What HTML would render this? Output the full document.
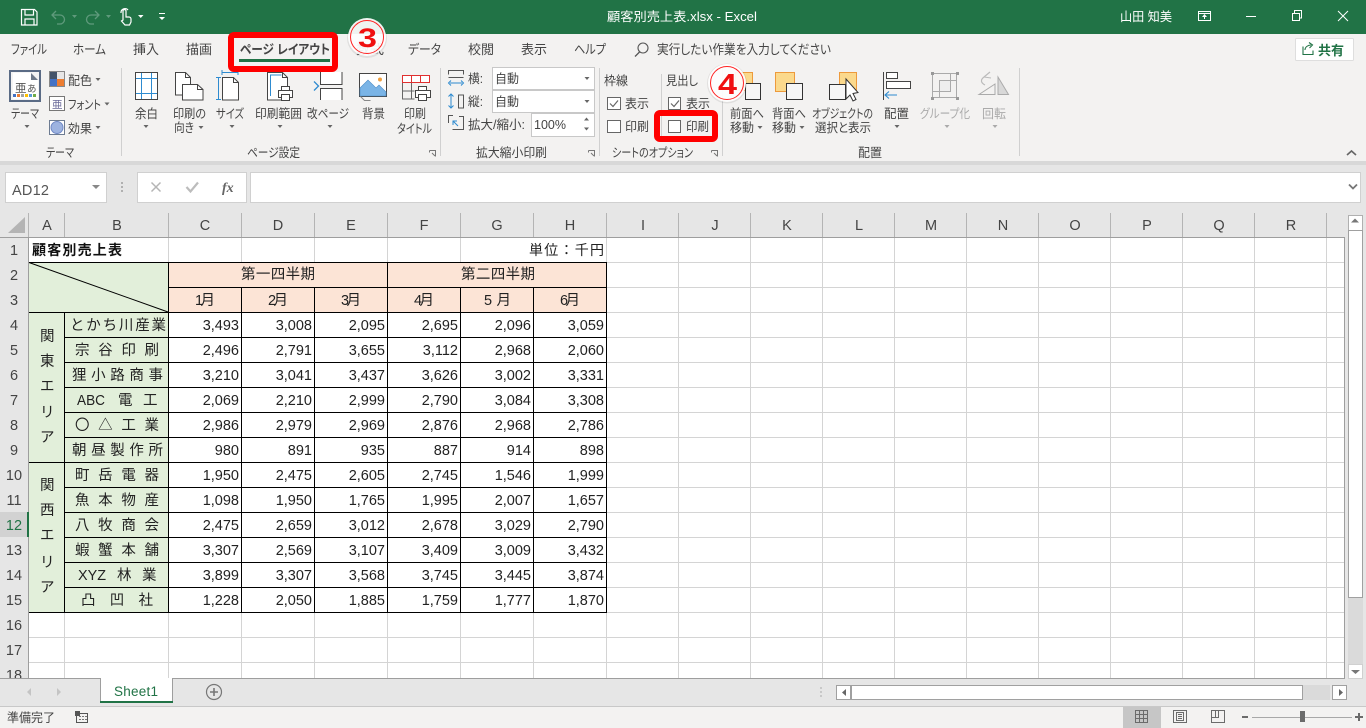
<!DOCTYPE html>
<html lang="ja"><head><meta charset="utf-8"><title>顧客別売上表.xlsx - Excel</title>
<style>
html,body{margin:0;padding:0;width:1366px;height:728px;overflow:hidden;background:#e6e6e6}
svg{display:block;position:absolute;left:0;top:0}
text{font-family:"Liberation Sans","Noto Sans CJK JP",sans-serif}
.u{font-size:12.5px;fill:#444;font-feature-settings:"palt"}
.g{font-size:12.5px;fill:#aaa;font-feature-settings:"palt"}
.tabs text{font-size:13px;font-feature-settings:"palt"}
.c{font-size:14.5px;fill:#222}
.h{font-size:14.5px;fill:#444;text-anchor:middle}
.n{font-size:14.5px;fill:#222;text-anchor:end}
.car{fill:#666}
.li{shape-rendering:crispEdges}
</style></head><body>
<svg width="1366" height="728" viewBox="0 0 1366 728" xmlns="http://www.w3.org/2000/svg">
<!-- chrome backgrounds -->
<g class="li">
<rect width="1366" height="728" fill="#e6e6e6"/>
<rect width="1366" height="34" fill="#217346"/>
<rect y="34" width="1366" height="127" fill="#f3f2f1"/>
<rect y="161" width="1366" height="4" fill="#d8d8d8"/>
<rect x="121" y="68" width="1" height="88" fill="#d0d0d0"/>
<rect x="440" y="68" width="1" height="88" fill="#d0d0d0"/>
<rect x="599" y="68" width="1" height="88" fill="#d0d0d0"/>
<rect x="661" y="74" width="1" height="66" fill="#d0d0d0"/>
<rect x="722" y="68" width="1" height="88" fill="#d0d0d0"/>
<rect x="1019" y="68" width="1" height="88" fill="#d0d0d0"/>
</g>
<!-- QAT -->
<g fill="none" stroke="#fff" stroke-width="1.2">
<path d="M21.5 9.5h13l2.5 2.5v13h-15.500z"/><path d="M25 9.500v5.500h8.500v-5.500M25 25v-6h9v6"/>
</g>
<g fill="none" stroke="#5f9a7c" stroke-width="1.3">
<path d="M56 11l-4 4 4 4M52 15h8a4.500 4.500 0 0 1 0 9h-3"/>
<path d="M95 11l4 4-4 4M99 15h-8a4.500 4.500 0 0 0 0 9h3"/>
</g>
<path d="M72 15h5l-2.500 3zM106 15h5l-2.500 3z" fill="#5f9a7c"/>
<g fill="none" stroke="#fff" stroke-width="1.200">
<path d="M123 20v-9a1.500 1.500 0 0 1 3 0v6h3a2 2 0 0 1 2 2v3l-1.500 3h-4.500l-3.500-4z"/><path d="M121 13a4 4 0 0 1 7-3"/>
</g>
<path d="M138 15h5.500l-2.750 3zM159 17h6l-3 3zM159 13h6v1h-6z" fill="#fff"/>
<!-- title -->
<text x="607" y="21" font-size="12.500" fill="#fff" textLength="150" lengthAdjust="spacingAndGlyphs">顧客別売上表.xlsx  -  Excel</text>
<text x="1120" y="21" font-size="12.500" fill="#fff" textLength="52" lengthAdjust="spacingAndGlyphs">山田 知美</text>
<g fill="none" stroke="#fff" stroke-width="1" class="li">
<rect x="1198.500" y="11.500" width="12" height="9"/><path d="M1199 13.500h11"/>
<path d="M1246 16.500h10"/>
<rect x="1292.500" y="13.500" width="7" height="7"/><path d="M1294.500 13v-2.500h7v7.500h-2"/>
</g>
<path d="M1204.500 14l2.500 3h-2v2h-1v-2h-2z" fill="#fff"/>
<path d="M1338 11l10 10M1348 11l-10 10" stroke="#fff" stroke-width="1" fill="none"/>
<!-- tabs -->
<g class="tabs" fill="#444">
<text x="11" y="54" textLength="36" lengthAdjust="spacingAndGlyphs">ファイル</text>
<text x="73" y="54" textLength="33" lengthAdjust="spacingAndGlyphs">ホーム</text>
<text x="133" y="54" textLength="26" lengthAdjust="spacingAndGlyphs">挿入</text>
<text x="186" y="54" textLength="26" lengthAdjust="spacingAndGlyphs">描画</text>
<text x="356" y="54" textLength="28" lengthAdjust="spacingAndGlyphs">数式</text>
<text x="408" y="54" textLength="33" lengthAdjust="spacingAndGlyphs">データ</text>
<text x="468" y="54" textLength="26" lengthAdjust="spacingAndGlyphs">校閲</text>
<text x="521" y="54" textLength="26" lengthAdjust="spacingAndGlyphs">表示</text>
<text x="574" y="54" textLength="32" lengthAdjust="spacingAndGlyphs">ヘルプ</text>
<text x="657" y="54" textLength="174" lengthAdjust="spacingAndGlyphs">実行したい作業を入力してください</text>
</g>
<text x="240" y="54" font-size="13" font-weight="700" fill="#444" style="font-feature-settings:'palt'" textLength="90" lengthAdjust="spacingAndGlyphs">ページ レイアウト</text>
<rect x="239" y="59" width="91" height="3" fill="#217346" class="li"/>
<circle cx="643" cy="48" r="5" fill="none" stroke="#555" stroke-width="1.100"/><path d="M639.500 52l-4.500 4.500" stroke="#555" stroke-width="1.300"/>
<!-- share -->
<rect x="1295.500" y="38.500" width="58" height="22" rx="1" fill="#fff" stroke="#dedede"/>
<path d="M1303 46.500v8h10v-4M1305 50c0-3 3-5 6-5M1309 42.500l3.500 2.500-3 3" fill="none" stroke="#217346" stroke-width="1.100"/>
<text x="1318" y="55" font-size="13" font-weight="700" fill="#217346" textLength="26" lengthAdjust="spacingAndGlyphs">共有</text>
<!-- theme group -->
<rect x="10" y="71" width="30" height="30" fill="#f4f4f4" stroke="#5a6b85" stroke-width="2" class="li"/>
<path d="M13 73h18l7 7v19h-25z" fill="#fff"/><path d="M31 73l7 7h-7z" fill="#6f7a8a"/>
<text x="15" y="92" font-size="11.500" fill="#555">亜</text><text x="27" y="92" font-size="9.500" fill="#555">あ</text>
<g class="li"><rect x="13" y="94" width="3" height="3" fill="#4472c4"/><rect x="17" y="94" width="3" height="3" fill="#ed7d31"/><rect x="21" y="94" width="3" height="3" fill="#a5a5a5"/><rect x="25" y="94" width="3" height="3" fill="#ffc000"/><rect x="29" y="94" width="3" height="3" fill="#5b9bd5"/><rect x="33" y="94" width="3" height="3" fill="#70ad47"/>
<rect x="49" y="71" width="16" height="16" fill="#888"/><rect x="50" y="72" width="7" height="7" fill="#44546a"/><rect x="57" y="72" width="7" height="7" fill="#e7e6e6"/><rect x="50" y="79" width="7" height="7" fill="#4472c4"/><rect x="57" y="79" width="7" height="7" fill="#ed7d31"/>
<rect x="49.500" y="96.500" width="15" height="14" fill="#fff" stroke="#777"/>
<rect x="49.500" y="120.500" width="15" height="14" fill="#fff" stroke="#6d7c92"/></g>
<text x="52" y="108" font-size="10.500" fill="#6a6a9a">亜</text>
<circle cx="57" cy="127.500" r="6" fill="#9db3e0" stroke="#6f88c4"/>
<text class="u" x="68" y="85" textLength="24" lengthAdjust="spacingAndGlyphs">配色</text>
<text class="u" x="68" y="109" textLength="33" lengthAdjust="spacingAndGlyphs">フォント</text>
<text class="u" x="68" y="133" textLength="24" lengthAdjust="spacingAndGlyphs">効果</text>
<text class="u" x="11" y="118" textLength="28" lengthAdjust="spacingAndGlyphs">テーマ</text>
<text class="u" x="46" y="157" textLength="28" lengthAdjust="spacingAndGlyphs">テーマ</text>
<path class="car" d="M24.500 125h5l-2.500 3zM95.500 78h5l-2.500 3zM104.500 102.500h5l-2.500 3zM95.500 126h5l-2.500 3zM143.500 125h5l-2.500 3zM198.500 126h5l-2.500 3zM229.500 125h5l-2.500 3zM277.500 125h5l-2.500 3zM327.500 125h5l-2.500 3zM757.500 126h5l-2.500 3zM799.500 126h5l-2.500 3zM894.500 125h5l-2.500 3z"/>
<path d="M944.500 125h5l-2.500 3zM992.500 125h5l-2.500 3z" fill="#aaa"/>
<!-- page setup -->
<g class="li" fill="none" stroke="#444">
<rect x="135.500" y="72.500" width="22" height="27" fill="#fff"/>
<path d="M141.500 73v26M151.500 73v26M136 78.500h21M136 93.500h21" stroke="#2e8bd0"/>
</g>
<g fill="#fff" stroke="#444" stroke-width="1">
<path d="M175.500 72.500h10l5 5v17.500h-15z"/><path d="M185.500 72.500v5h5" fill="none"/>
<path d="M182.500 84.500h15l5.500 5v10.500h-20.500z"/><path d="M197.500 84.500v5h5.500" fill="none"/>
<path d="M222.500 77.500h11l5 5v17.500h-16z"/><path d="M233.500 77.500v5h5" fill="none"/>
<path d="M267.500 72.500h15l5 5v22.500h-20z"/><path d="M282.500 72.500v5h5" fill="none"/>
</g>
<path d="M222 72.500h16M222 70v5M238 70v5M218.500 77v23M216 77.500h5M216 99.500h5" fill="none" stroke="#2e8bd0"/>
<path d="M270.500 96v-21h11" fill="none" stroke="#2e8bd0"/>
<g fill="#fff" stroke="#444"><path d="M281.500 86.500h8v4h-8z"/><rect x="278.500" y="90.500" width="14" height="7"/><rect x="281.500" y="94.500" width="8" height="6"/></g>
<path d="M320.500 72v12.500h21.500V72M320.500 100v-11.500h21.500V100" fill="#fff" stroke="#444"/>
<path d="M314 81.500l4.500 4.500-4.500 4.500" fill="none" stroke="#2e8bd0" stroke-width="1.300"/>
<g stroke="#444"><rect x="359.500" y="73.500" width="27" height="23" fill="#fff"/></g>
<path d="M360 88l8-8 8 8 3-3 7 7v4h-26z" fill="#7ab4e6" stroke="#4a8cc8" stroke-width=".6"/><circle cx="380" cy="79.500" r="2" fill="#f0a040"/>
<path d="M360.500 96.500l4 4h6" fill="none" stroke="#888"/>
<g class="li"><rect x="402.500" y="75.500" width="27" height="7" fill="#fff" stroke="#e03030"/><path d="M411.500 76v6M420.500 76v6" stroke="#e03030"/>
<path d="M402.500 83v16h12M402.500 91h12M411.500 83v16" stroke="#666" fill="none"/>
<g fill="#fff" stroke="#444"><rect x="418.500" y="86.500" width="8" height="4"/><rect x="415.500" y="90.500" width="15" height="7"/><rect x="418.500" y="94.500" width="8" height="6"/></g></g>
<g>
<text class="u" x="135" y="118" textLength="23" lengthAdjust="spacingAndGlyphs">余白</text>
<text class="u" x="173" y="118" textLength="33" lengthAdjust="spacingAndGlyphs">印刷の</text>
<text class="u" x="174" y="132" textLength="20" lengthAdjust="spacingAndGlyphs">向き</text>
<text class="u" x="216" y="118" textLength="28" lengthAdjust="spacingAndGlyphs">サイズ</text>
<text class="u" x="255" y="118" textLength="47" lengthAdjust="spacingAndGlyphs">印刷範囲</text>
<text class="u" x="307" y="118" textLength="42" lengthAdjust="spacingAndGlyphs">改ページ</text>
<text class="u" x="362" y="118" textLength="23" lengthAdjust="spacingAndGlyphs">背景</text>
<text class="u" x="404" y="118" textLength="22" lengthAdjust="spacingAndGlyphs">印刷</text>
<text class="u" x="397" y="133" textLength="35" lengthAdjust="spacingAndGlyphs">タイトル</text>
<text class="u" x="247" y="157" textLength="53" lengthAdjust="spacingAndGlyphs">ページ設定</text>
</g>
<path d="M429.500 150.500h6v6M429.500 150.500v2M432 153l3 3" fill="none" stroke="#777"/>
<!-- scale -->
<g fill="none" stroke="#555">
<path d="M448.500 74.500v-4h15v4M448.500 77.500h15" /><path d="M450 83h12" stroke="#2e8bd0"/><path d="M451 80.500l-2.500 2.500 2.500 2.500M461 80.500l2.500 2.500-2.500 2.500" stroke="#2e8bd0"/>
<rect x="458.500" y="95" width="5" height="13"/><path d="M451 94v14" stroke="#2e8bd0"/><path d="M448.500 96.500l2.500-2.500 2.500 2.500M448.500 105.500l2.500 2.500 2.500-2.500" stroke="#2e8bd0"/>
<path d="M448.500 123v-7.500h4.500M459 116.500h4.500v13h-11"/><path d="M453 121l5 5M453 125v-4h4" stroke="#2e8bd0"/>
</g>
<text class="u" x="468" y="83" textLength="15" lengthAdjust="spacingAndGlyphs">横:</text>
<text class="u" x="468" y="106" textLength="15" lengthAdjust="spacingAndGlyphs">縦:</text>
<text class="u" x="468" y="129" textLength="57" lengthAdjust="spacingAndGlyphs">拡大/縮小:</text>
<g class="li" fill="#fff" stroke="#c8c8c8"><rect x="492.500" y="67.500" width="102" height="22"/><rect x="492.500" y="90.500" width="102" height="22"/><rect x="531.500" y="113.500" width="63" height="23"/></g>
<text class="u" x="495" y="83" textLength="24" lengthAdjust="spacingAndGlyphs">自動</text>
<text class="u" x="495" y="106" textLength="24" lengthAdjust="spacingAndGlyphs">自動</text>
<text class="u" x="534" y="129" textLength="32" lengthAdjust="spacingAndGlyphs" style="font-size:13px">100%</text>
<path class="car" d="M584.500 77h5l-2.500 3zM584.500 100h5l-2.500 3zM584 120.500h5l-2.500-3zM584 127.500h5l-2.500 3z"/>
<text class="u" x="476" y="157" textLength="71" lengthAdjust="spacingAndGlyphs">拡大縮小印刷</text>
<path d="M588.500 150.500h6v6M588.500 150.500v2M591 153l3 3" fill="none" stroke="#777"/>
<!-- sheet options -->
<text class="u" x="604" y="85" textLength="24" lengthAdjust="spacingAndGlyphs">枠線</text>
<text class="u" x="666" y="85" textLength="32" lengthAdjust="spacingAndGlyphs">見出し</text>
<g class="li" fill="#fff" stroke="#666"><rect x="607.500" y="97.500" width="13" height="12"/><rect x="607.500" y="120.500" width="13" height="12"/><rect x="668.500" y="97.500" width="12" height="12"/><rect x="668.500" y="120.500" width="12" height="12"/></g>
<path d="M610 103.500l3 3 5-6M671 103.500l3 3 5-6" fill="none" stroke="#666" stroke-width="1.200"/>
<text class="u" x="625" y="108" textLength="24" lengthAdjust="spacingAndGlyphs">表示</text>
<text class="u" x="625" y="131" textLength="24" lengthAdjust="spacingAndGlyphs">印刷</text>
<text class="u" x="686" y="108" textLength="24" lengthAdjust="spacingAndGlyphs">表示</text>
<text class="u" x="686" y="131" textLength="23" lengthAdjust="spacingAndGlyphs">印刷</text>
<text class="u" x="612" y="157" textLength="81" lengthAdjust="spacingAndGlyphs">シートのオプション</text>
<path d="M711.500 150.500h6v6M711.500 150.500v2M714 153l3 3" fill="none" stroke="#777"/>
<!-- arrange -->
<g class="li"><rect x="735.500" y="72.500" width="17" height="18" fill="#fbd98c" stroke="#ed9a3c"/><rect x="745.500" y="83.500" width="15" height="16" fill="#f6f6f6" stroke="#333"/>
<rect x="775.500" y="72.500" width="19" height="19" fill="#fbd98c" stroke="#ed9a3c"/><rect x="786.500" y="83.500" width="16" height="16" fill="#f6f6f6" stroke="#333"/>
<rect x="839.500" y="72.500" width="17" height="19" fill="#fbd98c" stroke="#ed9a3c"/><rect x="829.500" y="84.500" width="16" height="15" fill="#f6f6f6" stroke="#333"/></g>
<path d="M846 79v20l4-4 3 6 3-1.500-3-6 5-1z" fill="#fff" stroke="#333"/>
<g class="li" fill="#fff" stroke="#444"><path d="M883.500 72v28" fill="none"/><rect x="886.500" y="72.500" width="11" height="6"/><rect x="886.500" y="81.500" width="24" height="7"/></g>
<path d="M885 95h12M889 91.500l-4 3.500 4 3.500" fill="none" stroke="#2e8bd0" stroke-width="1.100"/>
<text class="u" x="730" y="118" textLength="34" lengthAdjust="spacingAndGlyphs">前面へ</text>
<text class="u" x="730" y="132" textLength="24" lengthAdjust="spacingAndGlyphs">移動</text>
<text class="u" x="772" y="118" textLength="34" lengthAdjust="spacingAndGlyphs">背面へ</text>
<text class="u" x="772" y="132" textLength="24" lengthAdjust="spacingAndGlyphs">移動</text>
<text class="u" x="812" y="118" textLength="61" lengthAdjust="spacingAndGlyphs">オブジェクトの</text>
<text class="u" x="815" y="132" textLength="56" lengthAdjust="spacingAndGlyphs">選択と表示</text>
<text class="u" x="884" y="118" textLength="25" lengthAdjust="spacingAndGlyphs">配置</text>
<text class="u" x="858" y="157" textLength="24" lengthAdjust="spacingAndGlyphs">配置</text>
<g class="li" fill="none" stroke="#aaa"><rect x="932.500" y="73.500" width="24" height="24"/><rect x="939.500" y="80.500" width="11" height="11" fill="#eee"/><rect x="932.500" y="73.500" width="18" height="18"/><rect x="939.500" y="80.500" width="17" height="17"/></g>
<g class="li" fill="#999"><rect x="931" y="72" width="3" height="3"/><rect x="956" y="72" width="3" height="3"/><rect x="931" y="97" width="3" height="3"/><rect x="956" y="97" width="3" height="3"/></g>
<path d="M979 94.500l16-10.500v10.500z" fill="#f3f2f1" stroke="#aaa"/><path d="M998 77v17.500h10.500z" fill="#d8d8d8" stroke="#aaa"/>
<path d="M990 72l-6 5c-4 3-3 6 1 8" fill="none" stroke="#bbb" stroke-width="1.200"/><path d="M984 77l7 1" stroke="#bbb"/>
<text class="g" x="920" y="118" textLength="50" lengthAdjust="spacingAndGlyphs">グループ化</text>
<text class="g" x="982" y="118" textLength="24" lengthAdjust="spacingAndGlyphs">回転</text>
<path d="M1347 155l4.500-4 4.500 4" fill="none" stroke="#666" stroke-width="1.600"/>
<!-- formula bar -->
<g class="li" fill="#fff" stroke="#d0d0d0"><rect x="5.500" y="172.500" width="101" height="30"/><rect x="137.500" y="172.500" width="109" height="30"/><rect x="250.500" y="172.500" width="1110" height="30"/></g>
<text x="12" y="195" font-size="14.500" fill="#555" textLength="37" lengthAdjust="spacing">AD12</text>
<path d="M92 185h8l-4 4z" fill="#888"/>
<g fill="#b0b0b0" class="li"><rect x="121" y="182" width="2" height="2"/><rect x="121" y="186" width="2" height="2"/><rect x="121" y="190" width="2" height="2"/></g>
<path d="M151.500 182.500l9 9M160.500 182.500l-9 9" stroke="#b5b5b5" stroke-width="1.500" fill="none"/>
<path d="M186.500 187l4 4.500 7.500-9" stroke="#bcbcbc" stroke-width="2.200" fill="none"/>
<text x="222" y="192" font-size="14" font-style="italic" font-weight="700" fill="#666" style="font-family:'Liberation Serif',serif">fx</text>
<path d="M1349 184.500l4 4 4-4" fill="none" stroke="#777" stroke-width="1.800"/>
<!-- grid base -->
<g class="li">
<rect x="29" y="238" width="1315" height="440" fill="#fff"/>
<g fill="#d4d4d4">
<rect x="29" y="262" width="1315" height="1"/><rect x="29" y="287" width="1315" height="1"/><rect x="29" y="312" width="1315" height="1"/><rect x="29" y="337" width="1315" height="1"/><rect x="29" y="362" width="1315" height="1"/><rect x="29" y="387" width="1315" height="1"/><rect x="29" y="412" width="1315" height="1"/><rect x="29" y="437" width="1315" height="1"/><rect x="29" y="462" width="1315" height="1"/><rect x="29" y="487" width="1315" height="1"/><rect x="29" y="512" width="1315" height="1"/><rect x="29" y="537" width="1315" height="1"/><rect x="29" y="562" width="1315" height="1"/><rect x="29" y="587" width="1315" height="1"/><rect x="29" y="612" width="1315" height="1"/><rect x="29" y="637" width="1315" height="1"/><rect x="29" y="662" width="1315" height="1"/>
<rect x="168" y="238" width="1" height="440"/><rect x="241" y="238" width="1" height="440"/><rect x="314" y="238" width="1" height="440"/><rect x="387" y="238" width="1" height="440"/><rect x="460" y="238" width="1" height="440"/><rect x="533" y="262" width="1" height="416"/><rect x="606" y="238" width="1" height="440"/>
<rect x="64" y="262" width="1" height="416"/>
<rect x="678" y="238" width="1" height="440"/><rect x="750" y="238" width="1" height="440"/><rect x="822" y="238" width="1" height="440"/><rect x="894" y="238" width="1" height="440"/><rect x="966" y="238" width="1" height="440"/><rect x="1038" y="238" width="1" height="440"/><rect x="1110" y="238" width="1" height="440"/><rect x="1182" y="238" width="1" height="440"/><rect x="1254" y="238" width="1" height="440"/><rect x="1326" y="238" width="1" height="440"/>
</g>
<!-- headers -->
<rect x="0" y="213" width="1344" height="24" fill="#e6e6e6"/>
<rect x="0" y="213" width="28" height="465" fill="#e6e6e6"/>
<rect x="0" y="512" width="28" height="25" fill="#d2d2d2"/>
<g fill="#b4b4b4">
<rect x="64" y="213" width="1" height="24"/><rect x="168" y="213" width="1" height="24"/><rect x="241" y="213" width="1" height="24"/><rect x="314" y="213" width="1" height="24"/><rect x="387" y="213" width="1" height="24"/><rect x="460" y="213" width="1" height="24"/><rect x="533" y="213" width="1" height="24"/><rect x="606" y="213" width="1" height="24"/><rect x="678" y="213" width="1" height="24"/><rect x="750" y="213" width="1" height="24"/><rect x="822" y="213" width="1" height="24"/><rect x="894" y="213" width="1" height="24"/><rect x="966" y="213" width="1" height="24"/><rect x="1038" y="213" width="1" height="24"/><rect x="1110" y="213" width="1" height="24"/><rect x="1182" y="213" width="1" height="24"/><rect x="1254" y="213" width="1" height="24"/><rect x="1326" y="213" width="1" height="24"/>
</g>
<rect x="28" y="213" width="1" height="25" fill="#b4b4b4"/>
<rect x="0" y="237" width="1344" height="1" fill="#9e9e9e"/>
<rect x="28" y="237" width="1" height="441" fill="#9e9e9e"/>
<rect x="1344" y="237" width="1" height="442" fill="#9e9e9e"/>
<rect x="0" y="678" width="1345" height="1" fill="#9e9e9e"/>
<rect x="27" y="512" width="2" height="25" fill="#217346"/>
<!-- cell fills -->
<rect x="29" y="263" width="139" height="49" fill="#e2efda"/>
<rect x="169" y="263" width="437" height="49" fill="#fce4d6"/>
<rect x="29" y="313" width="136" height="299" fill="#e2efda"/>
<rect x="165" y="313" width="3" height="299" fill="#e2efda"/>
<rect x="169" y="313" width="437" height="299" fill="#fff"/>
<!-- black lines -->
<g fill="#000">
<rect x="29" y="262" width="578" height="1"/><rect x="169" y="287" width="438" height="1"/><rect x="29" y="312" width="578" height="1"/>
<rect x="65" y="337" width="542" height="1"/><rect x="65" y="362" width="542" height="1"/><rect x="65" y="387" width="542" height="1"/><rect x="65" y="412" width="542" height="1"/><rect x="65" y="437" width="542" height="1"/>
<rect x="29" y="462" width="578" height="1"/>
<rect x="65" y="487" width="542" height="1"/><rect x="65" y="512" width="542" height="1"/><rect x="65" y="537" width="542" height="1"/><rect x="65" y="562" width="542" height="1"/><rect x="65" y="587" width="542" height="1"/>
<rect x="29" y="612" width="578" height="1"/>
<rect x="64" y="312" width="1" height="301"/><rect x="168" y="262" width="1" height="351"/><rect x="241" y="287" width="1" height="326"/><rect x="314" y="287" width="1" height="326"/><rect x="387" y="262" width="1" height="351"/><rect x="460" y="287" width="1" height="326"/><rect x="533" y="287" width="1" height="326"/><rect x="606" y="262" width="1" height="351"/>
</g>
</g>
<path d="M29 262.500L168 312" stroke="#000" stroke-width="1" fill="none"/>
<path d="M8 233h17v-16z" fill="#b4b4b4"/>
<!-- column headers -->
<g>
<text class="h" x="47" y="230">A</text><text class="h" x="117" y="230">B</text><text class="h" x="205" y="230">C</text><text class="h" x="278" y="230">D</text><text class="h" x="351" y="230">E</text><text class="h" x="424" y="230">F</text><text class="h" x="497" y="230">G</text><text class="h" x="570" y="230">H</text><text class="h" x="643" y="230">I</text><text class="h" x="715" y="230">J</text><text class="h" x="787" y="230">K</text><text class="h" x="859" y="230">L</text><text class="h" x="931" y="230">M</text><text class="h" x="1003" y="230">N</text><text class="h" x="1075" y="230">O</text><text class="h" x="1147" y="230">P</text><text class="h" x="1219" y="230">Q</text><text class="h" x="1291" y="230">R</text>
<text class="h" x="14" y="255">1</text><text class="h" x="14" y="280">2</text><text class="h" x="14" y="305">3</text><text class="h" x="14" y="330">4</text><text class="h" x="14" y="355">5</text><text class="h" x="14" y="380">6</text><text class="h" x="14" y="405">7</text><text class="h" x="14" y="430">8</text><text class="h" x="14" y="455">9</text><text class="h" x="14" y="480">10</text><text class="h" x="14" y="505">11</text><text class="h" x="14" y="530" style="fill:#217346">12</text><text class="h" x="14" y="555">13</text><text class="h" x="14" y="580">14</text><text class="h" x="14" y="605">15</text><text class="h" x="14" y="630">16</text><text class="h" x="14" y="655">17</text><text class="h" x="14" y="680">18</text>
</g>
<rect x="0" y="679" width="1345" height="6" fill="#e6e6e6" class="li"/>
<!-- cell text -->
<text x="32" y="255" font-size="14" font-weight="700" fill="#111" textLength="90" lengthAdjust="spacing">顧客別売上表</text>
<text x="529" y="255" font-size="14" fill="#222" textLength="75" lengthAdjust="spacing">単位：千円</text>
<text class="c" x="241" y="279" textLength="74" lengthAdjust="spacing">第一四半期</text>
<text class="c" x="461" y="279" textLength="74" lengthAdjust="spacing">第二四半期</text>
<text class="c" x="195" y="305" textLength="20" lengthAdjust="spacing">1月</text>
<text class="c" x="268" y="305" textLength="20" lengthAdjust="spacing">2月</text>
<text class="c" x="341" y="305" textLength="20" lengthAdjust="spacing">3月</text>
<text class="c" x="414" y="305" textLength="20" lengthAdjust="spacing">4月</text>
<text class="c" x="484" y="305" textLength="27" lengthAdjust="spacing">5 月</text>
<text class="c" x="560" y="305" textLength="20" lengthAdjust="spacing">6月</text>
<text class="c" x="40" y="341">関</text><text class="c" x="40" y="366">東</text><text class="c" x="40" y="391">エ</text><text class="c" x="40" y="417">リ</text><text class="c" x="40" y="442">ア</text>
<text class="c" x="40" y="490">関</text><text class="c" x="40" y="515">西</text><text class="c" x="40" y="540">エ</text><text class="c" x="40" y="567">リ</text><text class="c" x="40" y="592">ア</text>
<text class="c" x="70" y="330" textLength="96" lengthAdjust="spacing">とかち川産業</text>
<text class="c" x="75" y="355" textLength="84" lengthAdjust="spacing">宗谷印刷</text>
<text class="c" x="72" y="380" textLength="91" lengthAdjust="spacing">狸小路商事</text>
<text class="c" x="77" y="405" textLength="28" lengthAdjust="spacingAndGlyphs">ABC</text><text class="c" x="118" y="405">電</text><text class="c" x="143" y="405">工</text>
<text class="c" x="75" y="430" textLength="84" lengthAdjust="spacing">〇△工業</text>
<text class="c" x="72" y="455" textLength="91" lengthAdjust="spacing">朝昼製作所</text>
<text class="c" x="75" y="480" textLength="84" lengthAdjust="spacing">町岳電器</text>
<text class="c" x="75" y="505" textLength="84" lengthAdjust="spacing">魚本物産</text>
<text class="c" x="75" y="530" textLength="84" lengthAdjust="spacing">八牧商会</text>
<text class="c" x="75" y="555" textLength="84" lengthAdjust="spacing">蝦蟹本舗</text>
<text class="c" x="78" y="580" textLength="28" lengthAdjust="spacingAndGlyphs">XYZ</text><text class="c" x="117" y="580">林</text><text class="c" x="142" y="580">業</text>
<text class="c" x="81" y="605" textLength="72" lengthAdjust="spacing">凸凹社</text>
<!-- numbers -->
<text class="n" x="239" y="330">3,493</text><text class="n" x="312" y="330">3,008</text><text class="n" x="385" y="330">2,095</text><text class="n" x="458" y="330">2,695</text><text class="n" x="531" y="330">2,096</text><text class="n" x="604" y="330">3,059</text>
<text class="n" x="239" y="355">2,496</text><text class="n" x="312" y="355">2,791</text><text class="n" x="385" y="355">3,655</text><text class="n" x="458" y="355">3,112</text><text class="n" x="531" y="355">2,968</text><text class="n" x="604" y="355">2,060</text>
<text class="n" x="239" y="380">3,210</text><text class="n" x="312" y="380">3,041</text><text class="n" x="385" y="380">3,437</text><text class="n" x="458" y="380">3,626</text><text class="n" x="531" y="380">3,002</text><text class="n" x="604" y="380">3,331</text>
<text class="n" x="239" y="405">2,069</text><text class="n" x="312" y="405">2,210</text><text class="n" x="385" y="405">2,999</text><text class="n" x="458" y="405">2,790</text><text class="n" x="531" y="405">3,084</text><text class="n" x="604" y="405">3,308</text>
<text class="n" x="239" y="430">2,986</text><text class="n" x="312" y="430">2,979</text><text class="n" x="385" y="430">2,969</text><text class="n" x="458" y="430">2,876</text><text class="n" x="531" y="430">2,968</text><text class="n" x="604" y="430">2,786</text>
<text class="n" x="239" y="455">980</text><text class="n" x="312" y="455">891</text><text class="n" x="385" y="455">935</text><text class="n" x="458" y="455">887</text><text class="n" x="531" y="455">914</text><text class="n" x="604" y="455">898</text>
<text class="n" x="239" y="480">1,950</text><text class="n" x="312" y="480">2,475</text><text class="n" x="385" y="480">2,605</text><text class="n" x="458" y="480">2,745</text><text class="n" x="531" y="480">1,546</text><text class="n" x="604" y="480">1,999</text>
<text class="n" x="239" y="505">1,098</text><text class="n" x="312" y="505">1,950</text><text class="n" x="385" y="505">1,765</text><text class="n" x="458" y="505">1,995</text><text class="n" x="531" y="505">2,007</text><text class="n" x="604" y="505">1,657</text>
<text class="n" x="239" y="530">2,475</text><text class="n" x="312" y="530">2,659</text><text class="n" x="385" y="530">3,012</text><text class="n" x="458" y="530">2,678</text><text class="n" x="531" y="530">3,029</text><text class="n" x="604" y="530">2,790</text>
<text class="n" x="239" y="555">3,307</text><text class="n" x="312" y="555">2,569</text><text class="n" x="385" y="555">3,107</text><text class="n" x="458" y="555">3,409</text><text class="n" x="531" y="555">3,009</text><text class="n" x="604" y="555">3,432</text>
<text class="n" x="239" y="580">3,899</text><text class="n" x="312" y="580">3,307</text><text class="n" x="385" y="580">3,568</text><text class="n" x="458" y="580">3,745</text><text class="n" x="531" y="580">3,445</text><text class="n" x="604" y="580">3,874</text>
<text class="n" x="239" y="605">1,228</text><text class="n" x="312" y="605">2,050</text><text class="n" x="385" y="605">1,885</text><text class="n" x="458" y="605">1,759</text><text class="n" x="531" y="605">1,777</text><text class="n" x="604" y="605">1,870</text>
<!-- bottom cover -->
<g class="li">
<rect x="0" y="679" width="1366" height="27" fill="#e6e6e6"/>
<rect x="0" y="678" width="1345" height="1" fill="#9e9e9e"/>
<!-- v scrollbar -->
<rect x="1345" y="213" width="21" height="466" fill="#e6e6e6"/>
<rect x="1348" y="231" width="15" height="433" fill="#dadada"/>
<rect x="1348.500" y="215.500" width="14" height="15" fill="#fff" stroke="#b0b0b0"/>
<rect x="1348.500" y="230.500" width="14" height="367" fill="#fff" stroke="#a0a0a0"/>
<rect x="1348.500" y="664.500" width="14" height="14" fill="#fff" stroke="#d0d0d0"/>
<!-- sheet tab -->
<rect x="100" y="678" width="73" height="25" fill="#fff"/>
<rect x="100" y="678" width="1" height="25" fill="#9e9e9e"/><rect x="172" y="678" width="1" height="25" fill="#9e9e9e"/>
<rect x="100" y="701" width="73" height="2" fill="#217346"/>
<!-- h scrollbar -->
<rect x="851" y="685" width="479" height="15" fill="#dadada"/>
<rect x="836.500" y="685.500" width="14" height="14" fill="#fff" stroke="#a0a0a0"/>
<rect x="851.500" y="685.500" width="451" height="14" fill="#fff" stroke="#a0a0a0"/>
<rect x="1332.500" y="685.500" width="14" height="14" fill="#fff" stroke="#a0a0a0"/>
<!-- status -->
<rect x="0" y="706" width="1366" height="22" fill="#f3f2f1"/>
<rect x="0" y="706" width="1366" height="1" fill="#c8c8c8"/>
<rect x="1123" y="707" width="38" height="21" fill="#c6c6c6"/>
</g>
<path d="M1351 222.500l4-4 4 4z M1351 670h9l-4.500 4z" fill="#777"/>
<path d="M846 689v7l-4-3.500zM1339 689v7l4-3.500z" fill="#666"/>
<g fill="#c8c8c8" class="li"><rect x="820" y="687" width="2" height="2"/><rect x="820" y="691" width="2" height="2"/><rect x="820" y="695" width="2" height="2"/></g>
<path d="M31 688v8l-4-4zM57 688v8l4-4z" fill="#c4c4c4"/>
<text x="114" y="696" font-size="13.500" fill="#217346" textLength="44" lengthAdjust="spacing">Sheet1</text>
<circle cx="214" cy="692" r="7.500" fill="none" stroke="#777" stroke-width="1.200"/><path d="M214 688v8M210 692h8" stroke="#777" stroke-width="1.600"/>
<text x="7" y="722" font-size="12.500" fill="#444" textLength="48" lengthAdjust="spacingAndGlyphs">準備完了</text>
<g class="li"><rect x="76.500" y="713.500" width="11" height="9" fill="none" stroke="#555"/><rect x="75" y="711" width="5" height="5" fill="#555"/><path d="M79 716.500h8M79 719.500h8" stroke="#777" stroke-dasharray="2 1"/></g>
<g class="li" fill="none" stroke="#6b6b6b"><rect x="1135.500" y="710.500" width="12" height="12"/><path d="M1139.500 711v11M1143.500 711v11M1136 714.500h11M1136 718.500h11"/>
<rect x="1173.500" y="710.500" width="13" height="12"/><path d="M1176.500 712.500v8h7v-8zM1178 714.500h4M1178 716.500h4M1178 718.500h4"/>
<rect x="1211.500" y="710.500" width="13" height="12"/><path d="M1211.500 717.500h7v-7M1215.500 711v6"/>
</g>
<g class="li"><rect x="1242" y="716" width="6" height="2" fill="#6b6b6b"/><rect x="1252" y="717" width="100" height="1" fill="#a8a8a8"/><rect x="1300" y="711" width="5" height="11" fill="#6b6b6b"/><rect x="1355" y="716" width="8" height="2" fill="#6b6b6b"/><rect x="1358" y="713" width="2" height="8" fill="#6b6b6b"/></g>
<!-- callouts -->
<rect x="231" y="35" width="104" height="34" rx="3" fill="none" stroke="#f00" stroke-width="6"/>
<rect x="657" y="113" width="58" height="26" rx="3" fill="none" stroke="#f00" stroke-width="6"/>
<g>
<circle cx="367" cy="38" r="20" fill="#000" opacity=".08"/>
<circle cx="367" cy="37" r="19" fill="#fff" fill-opacity=".93"/>
<circle cx="367" cy="37" r="16.500" fill="none" stroke="#f22" stroke-width="1"/>
<text x="358" y="47" font-size="27" font-weight="700" fill="#f01010" textLength="19" lengthAdjust="spacingAndGlyphs">3</text>
<circle cx="727" cy="83.500" r="20" fill="#000" opacity=".08"/>
<circle cx="727" cy="83" r="19" fill="#fff" fill-opacity=".93"/>
<circle cx="727" cy="83" r="16.500" fill="none" stroke="#f22" stroke-width="1"/>
<text x="718" y="94" font-size="29" font-weight="700" fill="#f01010" textLength="19" lengthAdjust="spacingAndGlyphs">4</text>
</g>
</svg>
</body></html>
